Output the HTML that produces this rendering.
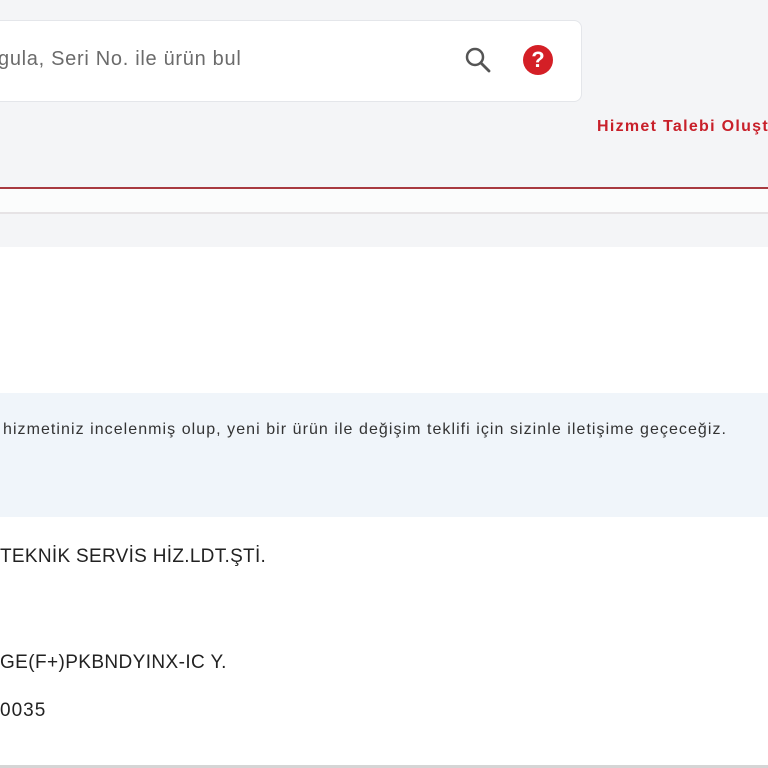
<!DOCTYPE html>
<html><head><meta charset="utf-8"><style>
body{margin:0;width:768px;height:768px;overflow:hidden;position:relative;background:#fff;font-family:"Liberation Sans",sans-serif;}
.a{position:absolute;white-space:nowrap;}
</style></head><body>
<div class="a" style="left:0;top:0;width:768px;height:188px;background:#f4f5f7"></div>
<div class="a" style="left:-20px;top:20px;width:600px;height:80px;background:#fff;border:1px solid #e4e6ea;border-radius:8px"></div>
<div class="a" style="left:-2px;top:48px;font-size:20px;color:#6b6b6b;letter-spacing:0.7px">gula, Seri No. ile ürün bul</div>
<svg class="a" style="left:464px;top:46px" width="28" height="28" viewBox="0 0 28 28"><circle cx="11" cy="11" r="8" fill="none" stroke="#555" stroke-width="2.5"/><path d="M17 17L25 25" stroke="#555" stroke-width="2.8" stroke-linecap="round"/></svg>
<div class="a" style="left:523px;top:45px;width:30px;height:30px;border-radius:50%;background:#d41f26;color:#fff;font-weight:bold;font-size:22px;text-align:center;line-height:30px">?</div>
<div class="a" style="left:597px;top:118px;font-size:16px;font-weight:bold;color:#c8202a;letter-spacing:1.3px">Hizmet Talebi Oluşt</div>
<div class="a" style="left:0;top:187px;width:768px;height:2px;background:#a83a40"></div>
<div class="a" style="left:0;top:189px;width:768px;height:23px;background:#fbfcfc;border-bottom:2px solid #e6e3e5"></div>
<div class="a" style="left:0;top:214px;width:768px;height:33px;background:#f4f5f7"></div>
<div class="a" style="left:0;top:393px;width:768px;height:124px;background:#f0f5fa"></div>
<div class="a" style="left:3px;top:421px;font-size:16px;color:#333;letter-spacing:1.05px">hizmetiniz incelenmiş olup, yeni bir ürün ile değişim teklifi için sizinle iletişime geçeceğiz.</div>
<div class="a" style="left:0;top:546px;font-size:19px;color:#222;letter-spacing:0.3px">TEKNİK SERVİS HİZ.LDT.ŞTİ.</div>
<div class="a" style="left:0;top:652px;font-size:19px;color:#222;letter-spacing:0.4px">GE(F+)PKBNDYINX-IC Y.</div>
<div class="a" style="left:0;top:700px;font-size:19px;color:#222;letter-spacing:1px">0035</div>
<div class="a" style="left:0;top:765px;width:768px;height:3px;background:#d5d5d5"></div>
</body></html>
